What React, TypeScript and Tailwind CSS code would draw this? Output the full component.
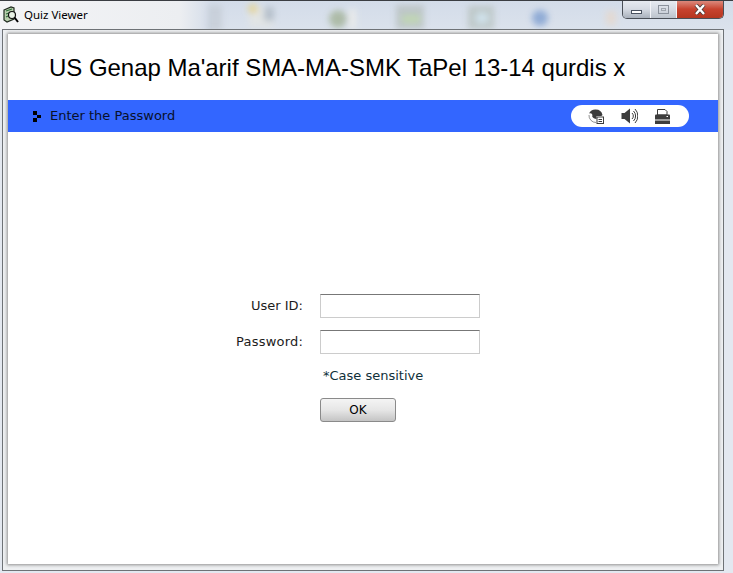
export default function App() {
  return (
    <div className="relative w-[733px] h-[573px] overflow-hidden bg-[#e3e8f0] flex flex-col border-t border-t-[#3a3d42]" style={{ fontFamily: '"DejaVu Sans", sans-serif' }}>
      {/* blurred desktop showing through the glass title bar */}
      <svg className="absolute left-0 top-0" width="733" height="29" aria-hidden="true">
        <defs>
          <linearGradient id="glass" x1="0" y1="0" x2="0" y2="1">
            <stop offset="0" stopColor="#d3dce9" />
            <stop offset="1" stopColor="#dbe2ec" />
          </linearGradient>
          <linearGradient id="left" x1="0" y1="0" x2="1" y2="0">
            <stop offset="0" stopColor="#f3f4f6" />
            <stop offset="0.85" stopColor="#eceef1" />
            <stop offset="1" stopColor="#d3dce9" />
          </linearGradient>
          <filter id="b" x="-40%" y="-40%" width="180%" height="180%"><feGaussianBlur stdDeviation="3" /></filter>
        </defs>
        <rect width="733" height="29" fill="url(#glass)" />
        <rect width="212" height="29" fill="url(#left)" />
        <g filter="url(#b)" opacity="0.8">
          <rect x="208" y="4" width="14" height="26" fill="#c5ccd6" />
          <rect x="249" y="6" width="24" height="20" fill="#e4e6e4" />
          <circle cx="253" cy="8" r="5" fill="#e8d486" />
          <rect x="264" y="6" width="10" height="14" fill="#aeb9c4" />
          <circle cx="338" cy="18" r="9" fill="#a3b297" />
          <rect x="349" y="8" width="7" height="20" fill="#eeeeea" />
          <rect x="396" y="4" width="28" height="24" fill="#b7c0c0" />
          <rect x="402" y="14" width="18" height="8" fill="#bcd6a6" />
          <rect x="468" y="5" width="26" height="23" fill="#b8c2c0" />
          <rect x="476" y="12" width="12" height="10" fill="#cfe3ec" />
          <circle cx="540" cy="17" r="8" fill="#7f9fd0" />
          <rect x="606" y="10" width="10" height="14" fill="#e6d8cc" />
        </g>
      </svg>

      {/* title bar */}
      <div className="relative h-[28px] shrink-0 flex items-start">
        <div className="flex items-center gap-[5px] pl-[3px] pt-[5px]">
          <svg width="16" height="18" viewBox="0 0 16 18" aria-hidden="true">
            <path d="M1 4 L8 1 L11 2 V13 L4 16 L1 14 Z" fill="#b9cfae" stroke="#1f2a1f" strokeWidth="1.2" />
            <path d="M3 5 L9 3 M3 8 L6 7 M3 11 L5 10" stroke="#2f6d3a" strokeWidth="1.2" />
            <circle cx="9" cy="9" r="3.5" fill="#e9f2e6" stroke="#111" strokeWidth="1.2" />
            <path d="M11.5 11.5 L15 16" stroke="#000" strokeWidth="2" />
          </svg>
          <span className="text-[11.5px] leading-[18px] text-black" style={{ fontFamily: '"Noto Sans", sans-serif' }}>Quiz Viewer</span>
        </div>
        <div className="ml-auto mr-[9px] flex h-[19px] -mt-[1px] rounded-b-[5px] border border-t-0 border-[#4a4f57] overflow-hidden">
          <div className="w-[28px] flex items-end justify-center pb-[4px] border-r border-r-[#f2f4f8] bg-gradient-to-b from-[#e8ecf2] via-[#d6dbe3] to-[#a9b1bc]">
            <div className="w-[11px] h-[4px] bg-white border border-[#4a5260]" />
          </div>
          <div className="w-[26px] flex items-center justify-center border-r border-r-[#f2f4f8] bg-gradient-to-b from-[#e8ecf2] via-[#d6dbe3] to-[#bcc3cc]">
            <div className="w-[11px] h-[9px] border border-[#8b929c] flex items-center justify-center">
              <div className="w-[5px] h-[3px] border border-[#a0a6ae]" />
            </div>
          </div>
          <div className="w-[46px] flex items-center justify-center bg-gradient-to-b from-[#dd9085] via-[#c8432f] to-[#b5361f]">
            <svg width="12" height="11" viewBox="0 0 12 11" aria-hidden="true">
              <path d="M2 1 L10 10 M10 1 L2 10" stroke="#4a3a38" strokeWidth="4" />
              <path d="M2 1 L10 10 M10 1 L2 10" stroke="#ffffff" strokeWidth="2.4" />
            </svg>
          </div>
        </div>
      </div>

      {/* frame */}
      <div className="relative ml-[2px] w-[722px] h-[542px] border border-[#6e7276] bg-[#eef0f2] pl-[5px] pr-[5px] pt-[4px] pb-[6px]">
        <div className="h-full bg-white shadow-[0_0_3px_1px_#8f8f8f] flex flex-col">
          <div className="h-[66px] shrink-0 flex items-center pl-[41px] pt-[2px] text-[24px] tracking-[-0.03px] text-black" style={{ fontFamily: '"Liberation Sans", Arial, sans-serif' }}>
            US Genap Ma'arif SMA-MA-SMK TaPel 13-14 qurdis x
          </div>
          <div className="h-[32px] shrink-0 bg-[#3366ff] flex items-center">
            <svg className="ml-[25px]" width="9" height="11" viewBox="0 0 9 11" aria-hidden="true" shapeRendering="crispEdges">
              <path d="M0 0H4V4H0Z M4 4H8V7H4Z M0 7H4V11H0Z" fill="#000" />
            </svg>
            <span className="ml-[8px] text-[13px] text-[#08102a]">Enter the Password</span>
            <div className="ml-auto mr-[29px] w-[118px] h-[22px] rounded-[11px] bg-white flex items-center pl-[17px]">
              <svg width="16" height="15" viewBox="0 0 16 15" aria-hidden="true">
                <path d="M7.5 0.5 A7 7 0 0 0 1 4.5 C3.5 3.5 5 5.5 4.2 7.5 C5 8.8 6.5 9.8 8.5 10 V7 H12 C13.5 7 14.5 6.5 14.5 6 A7 7 0 0 0 7.5 0.5 Z" fill="#3d3d3d" />
                <path d="M1 6 A7 7 0 0 0 8 13.5" fill="none" stroke="#777777" strokeWidth="0.8" />
                <rect x="9" y="8" width="6.5" height="6.5" fill="#fff" stroke="#3d3d3d" strokeWidth="1" />
                <rect x="10.5" y="10" width="3.5" height="1" fill="#3d3d3d" />
                <rect x="10.5" y="12" width="3.5" height="1" fill="#3d3d3d" />
              </svg>
              <svg className="ml-[17px]" width="17" height="16" viewBox="0 0 17 16" aria-hidden="true">
                <path d="M0.5 5 H3.5 L9 0.5 V15.5 L3.5 11 H0.5 Z" fill="#3d3d3d" />
                <path d="M11 5 A4 4 0 0 1 11 11 M12.5 3 A7 7 0 0 1 12.5 13 M14 1 A10 10 0 0 1 14 15" fill="none" stroke="#3d3d3d" strokeWidth="1" />
              </svg>
              <svg className="ml-[17px]" width="15" height="15" viewBox="0 0 15 15" aria-hidden="true">
                <path d="M2.5 0.5 H10 L12 2.5 V6 H2.5 Z" fill="#fff" stroke="#3d3d3d" strokeWidth="1" />
                <path d="M1 5.5 H14 Q15 5.5 15 6.5 V10.5 H0 V6.5 Q0 5.5 1 5.5 Z" fill="#3d3d3d" />
                <rect x="0" y="11.5" width="15" height="3.5" fill="#3d3d3d" />
                <rect x="11.5" y="7" width="1.5" height="1" fill="#fff" />
              </svg>
            </div>
          </div>

          <div className="pt-[162px] pl-[312px] flex flex-col items-start text-[13px] text-[#1c1c1c]">
            <div className="relative w-[160px] h-[24px] border border-[#cccccc] border-t-[#777777] bg-white">
              <span className="absolute right-[176px] top-[2px] whitespace-nowrap leading-[18px]">User ID:</span>
            </div>
            <div className="relative mt-[12px] w-[160px] h-[24px] border border-[#cccccc] border-t-[#777777] bg-white">
              <span className="absolute right-[176px] top-[2px] whitespace-nowrap leading-[18px] tracking-[0.2px]">Password:</span>
            </div>
            <div className="mt-[13px] pl-[3px] leading-[18px] text-[#10303a]">*Case sensitive</div>
            <button className="mt-[13px] w-[76px] h-[24px] rounded-[3px] border border-[#8a8a8a] bg-gradient-to-b from-[#f4f4f4] via-[#e6e6e6] to-[#c4c4c4] text-[12px] text-black">OK</button>
          </div>
        </div>
      </div>
    </div>
  );
}
